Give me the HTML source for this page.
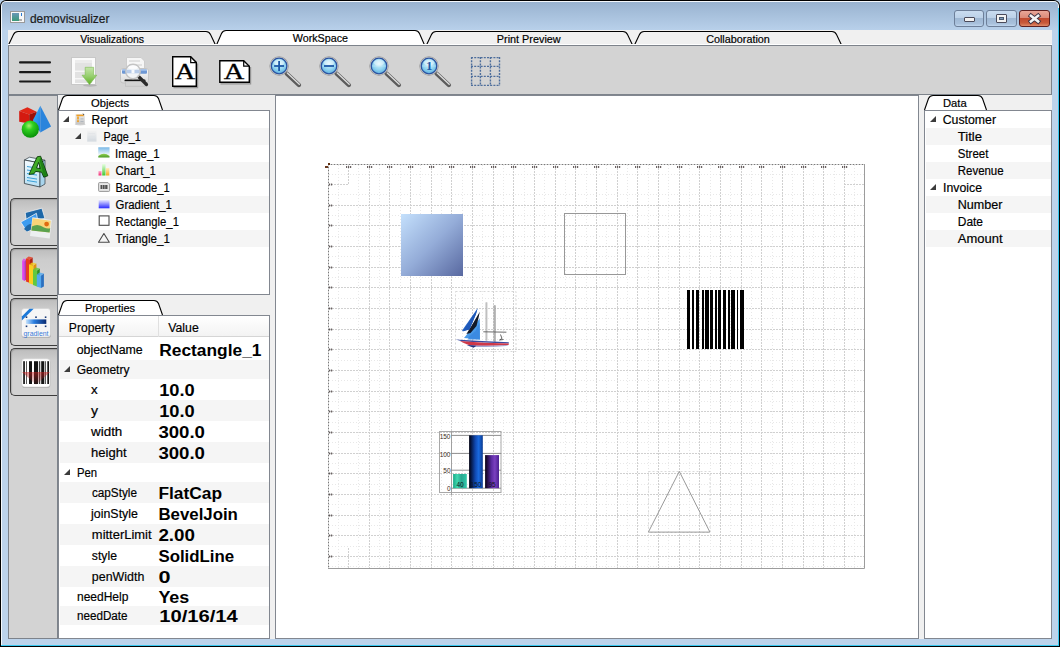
<!DOCTYPE html><html><head><meta charset="utf-8"><style>

*{box-sizing:border-box}
html,body{margin:0;padding:0}
body{width:1060px;height:647px;position:relative;overflow:hidden;background:#b9d1ea;font-family:"Liberation Sans",sans-serif;color:#000}
.ab{position:absolute}
.t{position:absolute;white-space:nowrap;font-size:12px;line-height:14px}
.row{position:absolute;left:60px;width:209px}

</style></head><body>
<div class="ab" style="left:0;top:0;width:1060px;height:647px;background:#000;border-radius:6px 6px 0 0"></div>
<div class="ab" style="left:1px;top:1px;width:1058px;height:645px;background:#f4f8fc;border-radius:5px 5px 0 0"></div>
<div class="ab" style="left:1058px;top:8px;width:1px;height:638px;background:#38c8f0"></div>
<div class="ab" style="left:1px;top:645px;width:1058px;height:1px;background:#38c8f0"></div>
<div class="ab" style="left:2px;top:2px;width:1056px;height:643px;background:#bcd3eb;border-radius:4px 4px 0 0"></div>
<div class="ab" style="left:2px;top:2px;width:1056px;height:28px;background:linear-gradient(#99b3d0,#b8d0ea);border-radius:4px 4px 0 0"></div>
<div class="ab" style="left:10px;top:11px;width:15px;height:12px;background:#f8f8f8;border:1px solid #9a9a9a;box-shadow:0 0 0 0 #000"></div>
<div class="ab" style="left:12px;top:13px;width:7px;height:8px;background:linear-gradient(#6a98b8,#3a9a78)"></div>
<div class="ab" style="left:21px;top:13px;width:1px;height:3px;background:#2a7ad0"></div>
<div class="ab" style="left:19px;top:19px;width:3px;height:2px;background:#b0b0b0"></div>
<div class="ab" style="left:954px;top:10px;width:30px;height:17px;border:1px solid #6d7f99;border-radius:3px;background:linear-gradient(#c9dcf0 0%,#bcd1e8 45%,#9fb8d4 50%,#a9c1dc 85%,#c0d6ee 100%)"></div>
<div class="ab" style="left:964px;top:13px;width:0;height:0"></div>
<div class="ab" style="left:964px;top:17px;width:11px;height:5px;background:#f2f2f2;border:1px solid #4a4a5a;border-radius:1px"></div>
<div class="ab" style="left:986px;top:10px;width:31px;height:17px;border:1px solid #6d7f99;border-radius:3px;background:linear-gradient(#c9dcf0 0%,#bcd1e8 45%,#9fb8d4 50%,#a9c1dc 85%,#c0d6ee 100%)"></div>
<div class="ab" style="left:996px;top:14px;width:11px;height:9px;background:#f2f2f2;border:1px solid #4a4a5a;border-radius:1px"></div>
<div class="ab" style="left:999px;top:17px;width:5px;height:3px;background:#7f9ab8;border:1px solid #4a5a70"></div>
<div class="ab" style="left:1019px;top:10px;width:31px;height:17px;border:1px solid #5e1f1f;border-radius:3px;background:linear-gradient(#e9a698 0%,#db8a78 45%,#c14a30 50%,#c85a3a 80%,#e08a68 100%)"></div>
<svg class="ab" style="left:1019px;top:10px" width="31" height="17"><path d="M11.9 5.8 L19.1 11.4 M19.1 5.8 L11.9 11.4" stroke="#3a3040" stroke-width="4.4" stroke-linecap="square"/><path d="M11.9 5.8 L19.1 11.4 M19.1 5.8 L11.9 11.4" stroke="#f4f4f4" stroke-width="2.6" stroke-linecap="square"/></svg>
<div class="ab" style="left:8px;top:30px;width:1044px;height:609px;background:#f0f0f0"></div>
<svg class="ab" style="left:0;top:0" width="1060" height="50"><path d="M8.5 45 L13.5 34.5 Q15 31.5 18 31.5 L206 31.5 Q209 31.5 210.5 34.5 L215.5 45 Z" fill="#f0f0f0"/><path d="M8.5 45 L13.5 34.5 Q15 31.5 18 31.5 L206 31.5 Q209 31.5 210.5 34.5 L215.5 45" fill="none" stroke="#000" stroke-width="1.1"/><path d="M216.5 45 L221.5 33.5 Q223 30.5 226 30.5 L415 30.5 Q418 30.5 419.5 33.5 L424.5 45 Z" fill="#ffffff"/><path d="M216.5 45 L221.5 33.5 Q223 30.5 226 30.5 L415 30.5 Q418 30.5 419.5 33.5 L424.5 45" fill="none" stroke="#000" stroke-width="1.1"/><path d="M426.5 45 L431.5 34.5 Q433 31.5 436 31.5 L623 31.5 Q626 31.5 627.5 34.5 L632.5 45 Z" fill="#f0f0f0"/><path d="M426.5 45 L431.5 34.5 Q433 31.5 436 31.5 L623 31.5 Q626 31.5 627.5 34.5 L632.5 45" fill="none" stroke="#000" stroke-width="1.1"/><path d="M634.5 45 L639.5 34.5 Q641 31.5 644 31.5 L832 31.5 Q835 31.5 836.5 34.5 L841.5 45 Z" fill="#f0f0f0"/><path d="M634.5 45 L639.5 34.5 Q641 31.5 644 31.5 L832 31.5 Q835 31.5 836.5 34.5 L841.5 45" fill="none" stroke="#000" stroke-width="1.1"/></svg>
<div class="ab" style="left:8px;top:44px;width:1044px;height:1px;background:#fff"></div>
<div class="ab" style="left:8px;top:45px;width:1044px;height:50px;background:#d3d3d3;border:1px solid #7d838b;border-bottom-width:1px"></div>
<div class="ab" style="left:8px;top:95px;width:50px;height:544px;background:#d3d3d3;border:1px solid #7d838b"></div>
<div class="ab" style="left:10px;top:198px;width:47px;height:48px;border:1px solid #3c3c3c;border-right:none;border-radius:5px 0 0 5px;background:linear-gradient(#bdbdbd,#cdcdcd 25%,#d2d2d2 60%,#d2d2d2);box-shadow:inset 1px 1px 1px rgba(0,0,0,0.15)"></div>
<div class="ab" style="left:10px;top:248px;width:47px;height:48px;border:1px solid #3c3c3c;border-right:none;border-radius:5px 0 0 5px;background:linear-gradient(#bdbdbd,#cdcdcd 25%,#d2d2d2 60%,#d2d2d2);box-shadow:inset 1px 1px 1px rgba(0,0,0,0.15)"></div>
<div class="ab" style="left:10px;top:298px;width:47px;height:48px;border:1px solid #3c3c3c;border-right:none;border-radius:5px 0 0 5px;background:linear-gradient(#bdbdbd,#cdcdcd 25%,#d2d2d2 60%,#d2d2d2);box-shadow:inset 1px 1px 1px rgba(0,0,0,0.15)"></div>
<div class="ab" style="left:10px;top:348px;width:47px;height:48px;border:1px solid #3c3c3c;border-right:none;border-radius:5px 0 0 5px;background:linear-gradient(#bdbdbd,#cdcdcd 25%,#d2d2d2 60%,#d2d2d2);box-shadow:inset 1px 1px 1px rgba(0,0,0,0.15)"></div>
<div class="ab" style="left:58px;top:110px;width:212px;height:185px;background:#fff;border:1px solid #828790"></div>
<div class="ab" style="left:58px;top:315px;width:212px;height:324px;background:#fff;border:1px solid #828790"></div>
<div class="ab" style="left:275px;top:95px;width:644px;height:544px;background:#fff;border:1px solid #828790"></div>
<div class="ab" style="left:924px;top:110px;width:128px;height:529px;background:#fff;border:1px solid #828790"></div>
<svg class="ab" style="left:0;top:0" width="1060" height="647"><path d="M58.5 110 L62.5 98.5 Q64 95.5 67 95.5 L154 95.5 Q157 95.5 158.5 98.5 L162.5 110 Z" fill="#fff"/><path d="M58.5 110 L62.5 98.5 Q64 95.5 67 95.5 L154 95.5 Q157 95.5 158.5 98.5 L162.5 110" fill="none" stroke="#000" stroke-width="1.1"/></svg>
<svg class="ab" style="left:0;top:0" width="1060" height="647"><path d="M58.5 315 L62.5 303.5 Q64 300.5 67 300.5 L154 300.5 Q157 300.5 158.5 303.5 L162.5 315 Z" fill="#fff"/><path d="M58.5 315 L62.5 303.5 Q64 300.5 67 300.5 L154 300.5 Q157 300.5 158.5 303.5 L162.5 315" fill="none" stroke="#000" stroke-width="1.1"/></svg>
<svg class="ab" style="left:0;top:0" width="1060" height="647"><path d="M924.5 110 L928.5 98.5 Q930 95.5 933 95.5 L978 95.5 Q981 95.5 982.5 98.5 L986.5 110 Z" fill="#fff"/><path d="M924.5 110 L928.5 98.5 Q930 95.5 933 95.5 L978 95.5 Q981 95.5 982.5 98.5 L986.5 110" fill="none" stroke="#000" stroke-width="1.1"/></svg>
<svg class="ab" style="left:63px;top:116px" width="7" height="7"><path d="M6 0 L6 6 L0 6 Z" fill="#3c3c3c"/></svg>
<div class="ab" style="left:60px;top:128px;width:209px;height:17px;background:#f5f5f5"></div>
<svg class="ab" style="left:75px;top:133px" width="7" height="7"><path d="M6 0 L6 6 L0 6 Z" fill="#3c3c3c"/></svg>
<div class="ab" style="left:60px;top:162px;width:209px;height:17px;background:#f5f5f5"></div>
<div class="ab" style="left:60px;top:196px;width:209px;height:17px;background:#f5f5f5"></div>
<div class="ab" style="left:60px;top:230px;width:209px;height:17px;background:#f5f5f5"></div>
<svg class="ab" style="left:930px;top:116px" width="7" height="7"><path d="M6 0 L6 6 L0 6 Z" fill="#3c3c3c"/></svg>
<div class="ab" style="left:926px;top:128px;width:125px;height:17px;background:#f5f5f5"></div>
<div class="ab" style="left:926px;top:162px;width:125px;height:17px;background:#f5f5f5"></div>
<svg class="ab" style="left:930px;top:184px" width="7" height="7"><path d="M6 0 L6 6 L0 6 Z" fill="#3c3c3c"/></svg>
<div class="ab" style="left:926px;top:196px;width:125px;height:17px;background:#f5f5f5"></div>
<div class="ab" style="left:926px;top:230px;width:125px;height:17px;background:#f5f5f5"></div>
<div class="ab" style="left:59px;top:316px;width:210px;height:21px;background:linear-gradient(#ffffff,#f3f3f3);border-bottom:1px solid #d5d5d5"></div>
<div class="ab" style="left:158px;top:316px;width:1px;height:21px;background:#e0e0e0"></div>
<div class="ab" style="left:60px;top:360px;width:209px;height:19px;background:#f5f5f5"></div>
<svg class="ab" style="left:64px;top:366px" width="7" height="7"><path d="M6 0 L6 6 L0 6 Z" fill="#3c3c3c"/></svg>
<div class="ab" style="left:60px;top:400px;width:209px;height:21px;background:#f5f5f5"></div>
<div class="ab" style="left:60px;top:442px;width:209px;height:21px;background:#f5f5f5"></div>
<svg class="ab" style="left:64px;top:469px" width="7" height="7"><path d="M6 0 L6 6 L0 6 Z" fill="#3c3c3c"/></svg>
<div class="ab" style="left:60px;top:482px;width:209px;height:21px;background:#f5f5f5"></div>
<div class="ab" style="left:60px;top:524px;width:209px;height:21px;background:#f5f5f5"></div>
<div class="ab" style="left:60px;top:566px;width:209px;height:21px;background:#f5f5f5"></div>
<div class="ab" style="left:60px;top:606px;width:209px;height:19px;background:#f5f5f5"></div>
<svg class="ab" style="left:0;top:45px" width="520" height="50" viewBox="0 45 520 50"><defs><linearGradient id="garr" x1="0" y1="0" x2="0" y2="1"><stop offset="0" stop-color="#c4e6a8"/><stop offset="0.5" stop-color="#98d070"/><stop offset="1" stop-color="#5fb024"/></linearGradient><radialGradient id="glens" cx="0.5" cy="0.35" r="0.65"><stop offset="0" stop-color="#d8f4fc"/><stop offset="0.6" stop-color="#90d4f0"/><stop offset="1" stop-color="#5aaee0"/></radialGradient><linearGradient id="ghand" x1="0" y1="0" x2="1" y2="0"><stop offset="0" stop-color="#707070"/><stop offset="0.5" stop-color="#e8e8e8"/><stop offset="1" stop-color="#909090"/></linearGradient><linearGradient id="gpr" x1="0" y1="0" x2="0" y2="1"><stop offset="0" stop-color="#fafafa"/><stop offset="1" stop-color="#d8d8d8"/></linearGradient><filter id="sh" x="-20%" y="-20%" width="140%" height="140%"><feGaussianBlur stdDeviation="0.6"/></filter></defs><rect x="19" y="61.3" width="32" height="2.2" rx="1" fill="#1a1a1a"/><rect x="19" y="71" width="32" height="2.2" rx="1" fill="#1a1a1a"/><rect x="19" y="80.4" width="32" height="2.2" rx="1" fill="#1a1a1a"/><rect x="71.5" y="57.5" width="24" height="27" fill="#fbfbfb" stroke="#c8c8c8" stroke-width="1"/><rect x="75" y="60" width="17" height="23" fill="#e2e2e2"/><rect x="75" y="60" width="17" height="3" fill="#ececec"/><rect x="75" y="70.6" width="17" height="1.2" fill="#fafafa"/><rect x="75" y="78.2" width="17" height="1.2" fill="#fafafa"/><ellipse cx="90" cy="85.5" rx="7" ry="1.2" fill="#9a9a9a" opacity="0.5" filter="url(#sh)"/><path d="M85.2 67.3 L93.6 67.3 L93.6 75.2 L96.8 75.2 L89.5 84.6 L82 75.2 L85.2 75.2 Z" fill="url(#garr)" stroke="#7ab850" stroke-width="0.6"/><path d="M126.5 57.5 L141 57.5 L144.5 61 L144.5 71 L126.5 71 Z" fill="#f6f6f6" stroke="#cccccc" stroke-width="1"/><rect x="129" y="60" width="11" height="2" fill="#e2e2e2"/><rect x="129" y="64" width="13" height="2" fill="#e2e2e2"/><rect x="120.5" y="68.5" width="28" height="14.5" rx="2.5" fill="url(#gpr)" stroke="#c4c4c4" stroke-width="1"/><rect x="122" y="69.5" width="25" height="4.2" rx="1" fill="#6e98d4"/><rect x="122" y="69.5" width="25" height="1.4" fill="#9cbce8"/><rect x="124.5" y="79.6" width="21" height="1.8" rx="0.9" fill="#141414"/><rect x="125.5" y="81.4" width="19.5" height="4.8" fill="#d2d2d2" stroke="#bababa" stroke-width="0.6"/><line x1="138.5" y1="76.5" x2="146.5" y2="84.5" stroke="#2a2a2a" stroke-width="3.2" stroke-linecap="round"/><circle cx="133" cy="71.4" r="7.2" fill="#f4f6f8" fill-opacity="0.9" stroke="#c4c4c4" stroke-width="1.4"/><rect x="126.5" y="69.8" width="13" height="3.4" fill="#a8c0e4" opacity="0.75"/><rect x="131.5" y="69.8" width="3" height="3.4" fill="#ffffff" opacity="0.9"/><ellipse cx="133" cy="67.5" rx="4.5" ry="2" fill="#ffffff" opacity="0.7"/><path d="M173.5 87.6 L197.6 87.6 L197.6 63.6" fill="none" stroke="#6a6a6a" stroke-width="1.2" opacity="0.6"/><path d="M172.7 56.7 L190.7 56.7 L196.3 62.4 L196.3 86.3 L172.7 86.3 Z" fill="#fff" stroke="#000" stroke-width="1.4"/><path d="M190.7 56.7 L190.7 62.6 L196.3 62.6" fill="none" stroke="#000" stroke-width="1.2"/><text x="185" y="78.9" font-family="Liberation Serif" font-size="23.5" text-anchor="middle" textLength="20.5" lengthAdjust="spacingAndGlyphs" stroke="#000" stroke-width="0.35">A</text><path d="M220.5 83.8 L250.6 83.8 L250.6 67" fill="none" stroke="#6a6a6a" stroke-width="1.2" opacity="0.6"/><path d="M219.8 60.8 L243.7 60.8 L249.3 66.2 L249.3 82.3 L219.8 82.3 Z" fill="#fff" stroke="#000" stroke-width="1.4"/><path d="M243.7 60.8 L243.7 66.1 L249.3 66.1" fill="none" stroke="#000" stroke-width="1.2"/><text x="234" y="78.6" font-family="Liberation Serif" font-size="23.5" text-anchor="middle" textLength="20.5" lengthAdjust="spacingAndGlyphs" stroke="#000" stroke-width="0.35">A</text><line x1="286.6" y1="73.5" x2="298.90000000000003" y2="85" stroke="#5c5c5c" stroke-width="4.4" stroke-linecap="round"/><line x1="287.3" y1="73" x2="299.3" y2="84.3" stroke="#dcdcdc" stroke-width="1.4" stroke-linecap="round"/><circle cx="279.1" cy="66" r="8.9" fill="none" stroke="#9a9a9a" stroke-width="1.6"/><circle cx="279.1" cy="66" r="8.5" fill="none" stroke="#e6e6e6" stroke-width="0.8"/><circle cx="279.1" cy="66" r="7.8" fill="url(#glens)" stroke="#2a52a0" stroke-width="1.3"/><ellipse cx="279.1" cy="62.8" rx="5" ry="2.8" fill="#ffffff" opacity="0.4"/><rect x="272.6" y="65.6" width="13" height="0.8" fill="#ffffff" opacity="0.35"/><rect x="274.1" y="65.1" width="10" height="1.8" fill="#1c58a8"/><rect x="278.20000000000005" y="61" width="1.8" height="10" fill="#1c58a8"/><line x1="336.5" y1="73.5" x2="348.8" y2="85" stroke="#5c5c5c" stroke-width="4.4" stroke-linecap="round"/><line x1="337.2" y1="73" x2="349.2" y2="84.3" stroke="#dcdcdc" stroke-width="1.4" stroke-linecap="round"/><circle cx="329" cy="66" r="8.9" fill="none" stroke="#9a9a9a" stroke-width="1.6"/><circle cx="329" cy="66" r="8.5" fill="none" stroke="#e6e6e6" stroke-width="0.8"/><circle cx="329" cy="66" r="7.8" fill="url(#glens)" stroke="#2a52a0" stroke-width="1.3"/><ellipse cx="329" cy="62.8" rx="5" ry="2.8" fill="#ffffff" opacity="0.4"/><rect x="322.5" y="65.6" width="13" height="0.8" fill="#ffffff" opacity="0.35"/><rect x="324" y="65.1" width="10" height="1.8" fill="#1c58a8"/><line x1="386.5" y1="73.5" x2="398.8" y2="85" stroke="#5c5c5c" stroke-width="4.4" stroke-linecap="round"/><line x1="387.2" y1="73" x2="399.2" y2="84.3" stroke="#dcdcdc" stroke-width="1.4" stroke-linecap="round"/><circle cx="379" cy="66" r="8.9" fill="none" stroke="#9a9a9a" stroke-width="1.6"/><circle cx="379" cy="66" r="8.5" fill="none" stroke="#e6e6e6" stroke-width="0.8"/><circle cx="379" cy="66" r="7.8" fill="url(#glens)" stroke="#2a52a0" stroke-width="1.3"/><ellipse cx="379" cy="62.8" rx="5" ry="2.8" fill="#ffffff" opacity="0.4"/><rect x="372.5" y="65.6" width="13" height="0.8" fill="#ffffff" opacity="0.35"/><line x1="436.5" y1="73.5" x2="448.8" y2="85" stroke="#5c5c5c" stroke-width="4.4" stroke-linecap="round"/><line x1="437.2" y1="73" x2="449.2" y2="84.3" stroke="#dcdcdc" stroke-width="1.4" stroke-linecap="round"/><circle cx="429" cy="66" r="8.9" fill="none" stroke="#9a9a9a" stroke-width="1.6"/><circle cx="429" cy="66" r="8.5" fill="none" stroke="#e6e6e6" stroke-width="0.8"/><circle cx="429" cy="66" r="7.8" fill="url(#glens)" stroke="#2a52a0" stroke-width="1.3"/><ellipse cx="429" cy="62.8" rx="5" ry="2.8" fill="#ffffff" opacity="0.4"/><rect x="422.5" y="65.6" width="13" height="0.8" fill="#ffffff" opacity="0.35"/><text x="429.3" y="70.3" font-family="Liberation Serif" font-size="13" font-weight="bold" fill="#1c58a8" text-anchor="middle">1</text><line x1="471.6" y1="57" x2="471.6" y2="86" stroke="#4e6e9c" stroke-width="1.4" stroke-dasharray="2 1.2"/><line x1="480.4" y1="57" x2="480.4" y2="86" stroke="#4e6e9c" stroke-width="1.4" stroke-dasharray="2 1.2"/><line x1="490.4" y1="57" x2="490.4" y2="86" stroke="#4e6e9c" stroke-width="1.4" stroke-dasharray="2 1.2"/><line x1="499.5" y1="57" x2="499.5" y2="86" stroke="#4e6e9c" stroke-width="1.4" stroke-dasharray="2 1.2"/><line x1="471" y1="57.6" x2="500" y2="57.6" stroke="#4e6e9c" stroke-width="1.4" stroke-dasharray="2 1.2"/><line x1="471" y1="66.4" x2="500" y2="66.4" stroke="#4e6e9c" stroke-width="1.4" stroke-dasharray="2 1.2"/><line x1="471" y1="76.4" x2="500" y2="76.4" stroke="#4e6e9c" stroke-width="1.4" stroke-dasharray="2 1.2"/><line x1="471" y1="85.4" x2="500" y2="85.4" stroke="#4e6e9c" stroke-width="1.4" stroke-dasharray="2 1.2"/></svg>
<svg class="ab" style="left:8px;top:95px" width="50" height="300" viewBox="8 95 50 300"><defs><radialGradient id="gsph" cx="0.42" cy="0.3" r="0.7"><stop offset="0" stop-color="#a8f070"/><stop offset="0.35" stop-color="#30d020"/><stop offset="1" stop-color="#089008"/></radialGradient><linearGradient id="gpyrL" x1="0" y1="0" x2="1" y2="1"><stop offset="0" stop-color="#40b8ff"/><stop offset="1" stop-color="#1878e0"/></linearGradient><linearGradient id="gpyrR" x1="0" y1="0" x2="1" y2="1"><stop offset="0" stop-color="#2a8ee8"/><stop offset="1" stop-color="#3c88d8"/></linearGradient><linearGradient id="ggrad" x1="0" y1="0" x2="1" y2="0"><stop offset="0" stop-color="#c8e4fc"/><stop offset="0.4" stop-color="#2a7ee0"/><stop offset="1" stop-color="#0a2a70"/></linearGradient><linearGradient id="gdoc" x1="0" y1="0" x2="0" y2="1"><stop offset="0" stop-color="#f4fbff"/><stop offset="1" stop-color="#b8e0f4"/></linearGradient><linearGradient id="gA" x1="0" y1="0" x2="1" y2="1"><stop offset="0" stop-color="#58c030"/><stop offset="1" stop-color="#1a8a18"/></linearGradient><linearGradient id="gred" x1="0" y1="0" x2="0" y2="1"><stop offset="0" stop-color="#d02020" stop-opacity="0.55"/><stop offset="1" stop-color="#802020" stop-opacity="0.1"/></linearGradient></defs><path d="M19.2 111 L27.4 107.3 L36.6 111.7 L29.2 114.5 Z" fill="#e02818"/><path d="M19.2 111 L29.2 114.5 L29.2 123.5 L19.2 121.7 Z" fill="#d41a10"/><path d="M29.2 114.5 L36.6 111.7 L36.6 119.5 L29.2 123.5 Z" fill="#9c1008"/><path d="M40.3 105.8 L32.9 120.3 L40.3 132.5 Z" fill="url(#gpyrL)"/><path d="M40.3 105.8 L51.1 126.6 L40.3 132.5 Z" fill="#2a84dc"/><circle cx="30.3" cy="129.2" r="8.6" fill="url(#gsph)"/><path d="M24.4 160 L29.5 157.2 L45 160.2 L40 163 Z" fill="#e8f6fc" stroke="#303a40" stroke-width="0.7"/><path d="M24.4 160 L40 163 L40 187 L24.4 183.5 Z" fill="url(#gdoc)" stroke="#303a40" stroke-width="0.8"/><path d="M40 163 L45 160.2 L45 184 L40 187 Z" fill="#a8d4ec" stroke="#303a40" stroke-width="0.7"/><line x1="27" y1="166.5" x2="37" y2="168.1" stroke="#3aa0d8" stroke-width="1"/><line x1="27" y1="170" x2="37" y2="171.6" stroke="#3aa0d8" stroke-width="1"/><line x1="27" y1="173.5" x2="37" y2="175.1" stroke="#3aa0d8" stroke-width="1"/><line x1="27" y1="177.5" x2="37" y2="179.1" stroke="#3aa0d8" stroke-width="1"/><line x1="27" y1="180.5" x2="37" y2="182.1" stroke="#3aa0d8" stroke-width="1"/><path d="M37.2 156.8 L40.6 156.2 L47.8 175.8 L43.8 177.2 L41.6 172.2 L35.6 171.4 L34 173.8 L29 174.4 Z M36.6 168 L38.6 162.4 L40.3 168.6 Z" fill="url(#gA)" stroke="#0a3a0a" stroke-width="0.9" fill-rule="evenodd" stroke-linejoin="round"/><path d="M40.6 157.5 L46.5 175 L44.2 176 L39.4 160 Z" fill="#1a7a14" opacity="0.8"/><path d="M25.2 212.6 L41.9 208.2 L44.9 218.4 L26.5 222 Z" fill="#1e68a8" stroke="#f0f0f0" stroke-width="0.8"/><path d="M20.8 222.1 L36.4 213.3 L39 227 L26.9 231.6 Z" fill="#3c9cf0" stroke="#f0f0f0" stroke-width="0.8"/><path d="M24 229 Q28 223 34 224 L37 227 L27 231.5 Z" fill="#1e68a8"/><path d="M32.4 217.3 L51.7 220 L49.7 238.4 L30 236 Z" fill="#eceff0"/><path d="M32.6 218.3 L50.8 220.8 L49.6 232.5 L31.4 230.5 Z" fill="#f8d478"/><path d="M31.8 226.5 Q38 223 44 227.5 Q47 229 50.2 228.3 L49.6 232.5 L31.4 230.5 Z" fill="#5aa24e"/><circle cx="46.6" cy="224.1" r="2.4" fill="#e06a10"/><path d="M22.2 260.5 L24.419999999999998 261.5 L24.419999999999998 281 L22.2 279.5 Z" fill="#e040f0"/><path d="M24.419999999999998 261.5 L25.9 259.5 L25.9 279.5 L24.419999999999998 281 Z" fill="#b020c0"/><path d="M22.2 260.5 L23.68 258.5 L25.9 259.5 L24.419999999999998 261.5 Z" fill="#e040f0" opacity="0.8"/><path d="M25.9 258.5 L29.98 259.5 L29.98 283 L25.9 281.5 Z" fill="#e83a20"/><path d="M29.98 259.5 L32.7 257.5 L32.7 281.5 L29.98 283 Z" fill="#b02010"/><path d="M25.9 258.5 L28.62 256.5 L32.7 257.5 L29.98 259.5 Z" fill="#e83a20" opacity="0.8"/><path d="M29 264.6 L33.44 265.6 L33.44 284.7 L29 283.2 Z" fill="#f8d020"/><path d="M33.44 265.6 L36.4 263.6 L36.4 283.2 L33.44 284.7 Z" fill="#e09010"/><path d="M29 264.6 L31.96 262.6 L36.4 263.6 L33.44 265.6 Z" fill="#f8d020" opacity="0.8"/><path d="M33 269.4 L37.08 270.4 L37.08 286.4 L33 284.9 Z" fill="#60c840"/><path d="M37.08 270.4 L39.8 268.4 L39.8 284.9 L37.08 286.4 Z" fill="#309020"/><path d="M33 269.4 L35.72 267.4 L39.8 268.4 L37.08 270.4 Z" fill="#60c840" opacity="0.8"/><path d="M36.8 274.5 L41.059999999999995 275.5 L41.059999999999995 288 L36.8 286.5 Z" fill="#50a8f0"/><path d="M41.059999999999995 275.5 L43.9 273.5 L43.9 286.5 L41.059999999999995 288 Z" fill="#2a70c0"/><path d="M36.8 274.5 L39.64 272.5 L43.9 273.5 L41.059999999999995 275.5 Z" fill="#50a8f0" opacity="0.8"/><rect x="21.5" y="309.5" width="29.5" height="28.5" rx="3" fill="#808080" opacity="0.45" filter="url(#sh)"/><rect x="21.5" y="308.5" width="29" height="28.5" rx="3" fill="#f6f6f6" stroke="#d0d0d0" stroke-width="0.6"/><path d="M21.8 316.5 L29.5 308.8 L33.7 308.8 L21.8 320.6 Z" fill="#1a78d8"/><rect x="25.9" y="319.4" width="20.4" height="4.5" fill="url(#ggrad)"/><rect x="25.7" y="316.4" width="1.6" height="1.6" fill="#1a3a78"/><rect x="25.7" y="325.5" width="1.6" height="1.6" fill="#1a3a78"/><rect x="35.2" y="316.4" width="1.6" height="1.6" fill="#1a3a78"/><rect x="35.2" y="325.5" width="1.6" height="1.6" fill="#1a3a78"/><rect x="44.800000000000004" y="316.4" width="1.6" height="1.6" fill="#1a3a78"/><rect x="44.800000000000004" y="325.5" width="1.6" height="1.6" fill="#1a3a78"/><text x="36" y="335.6" font-family="Liberation Sans" font-size="7.2" fill="#3a7ad8" text-anchor="middle" textLength="25" lengthAdjust="spacingAndGlyphs">gradient</text><rect x="21.8" y="359.5" width="28.5" height="28.5" rx="3" fill="#808080" opacity="0.45" filter="url(#sh)"/><rect x="21.8" y="358.8" width="28.2" height="28.2" rx="3" fill="#fff" stroke="#d0d0d0" stroke-width="0.6"/><rect x="23.2" y="361.2" width="1.6999999999999993" height="22.8" fill="#141414"/><rect x="26.1" y="361.2" width="0.6999999999999993" height="22.8" fill="#141414"/><rect x="29" y="361.2" width="3" height="22.8" fill="#141414"/><rect x="34" y="361.2" width="4.100000000000001" height="22.8" fill="#141414"/><rect x="39.2" y="361.2" width="1.0" height="22.8" fill="#141414"/><rect x="41.2" y="361.2" width="3.0999999999999943" height="22.8" fill="#141414"/><rect x="45.3" y="361.2" width="0.7000000000000028" height="22.8" fill="#141414"/><rect x="47.3" y="361.2" width="1.7000000000000028" height="22.8" fill="#141414"/><path d="M22 372 L50 372 L36 385 Z" fill="url(#gred)"/></svg>
<svg class="ab" style="left:70px;top:110px" width="45" height="140" viewBox="70 110 45 140"><defs><linearGradient id="gimg" x1="0" y1="0" x2="0" y2="1"><stop offset="0" stop-color="#8cc8f0"/><stop offset="0.5" stop-color="#e4f2fa"/><stop offset="0.58" stop-color="#88cc50"/><stop offset="0.85" stop-color="#58a830"/><stop offset="1" stop-color="#e8f0e0"/></linearGradient><linearGradient id="ggr2" x1="0" y1="0" x2="0" y2="1"><stop offset="0" stop-color="#ffffff"/><stop offset="1" stop-color="#2020ff"/></linearGradient></defs><defs><linearGradient id="grep" x1="0" y1="0" x2="0" y2="1"><stop offset="0" stop-color="#ececec"/><stop offset="1" stop-color="#c4c4c4"/></linearGradient><linearGradient id="gpg" x1="0" y1="0" x2="0" y2="1"><stop offset="0" stop-color="#f2f2f2"/><stop offset="1" stop-color="#d4dae0"/></linearGradient></defs><ellipse cx="80.2" cy="124.6" rx="5.5" ry="0.8" fill="#b0b0b0" opacity="0.5"/><rect x="75.4" y="114" width="9.4" height="10.4" fill="url(#grep)"/><rect x="76.4" y="114.6" width="7.4" height="1.6" fill="#f0a028"/><rect x="77.5" y="116" width="1" height="5" fill="#f4b040"/><circle cx="78" cy="118" r="1" fill="#f0a028"/><circle cx="78" cy="121.2" r="1" fill="#f0a028"/><rect x="80.5" y="118.5" width="3" height="0.8" fill="#a8b0b8"/><rect x="80.5" y="121" width="3" height="0.8" fill="#a8b0b8"/><path d="M82.6 113 L84.4 114.8 L83.2 115.2 Z" fill="#505050"/><rect x="87.2" y="130.6" width="9.3" height="11" fill="url(#gpg)"/><rect x="88.5" y="133" width="6.5" height="0.6" fill="#dfe3e6"/><rect x="88.5" y="136" width="6.5" height="0.6" fill="#dfe3e6"/><rect x="88.5" y="139" width="6.5" height="0.6" fill="#d8dde2"/><defs><linearGradient id="gsky" x1="0" y1="0" x2="0" y2="1"><stop offset="0" stop-color="#78b8e8"/><stop offset="1" stop-color="#e8f4fa"/></linearGradient><linearGradient id="ghill" x1="0" y1="0" x2="0" y2="1"><stop offset="0" stop-color="#90d050"/><stop offset="1" stop-color="#4a9a28"/></linearGradient></defs><rect x="98.3" y="147.3" width="11.2" height="10.3" fill="#eef4f0"/><rect x="98.3" y="147.3" width="11.2" height="7" fill="url(#gsky)"/><path d="M98.3 156 Q103.9 151.5 109.5 156 L109.5 157.6 L98.3 157.6 Z" fill="url(#ghill)"/><defs><linearGradient id="gc1" x1="0" y1="0" x2="0" y2="1"><stop offset="0" stop-color="#ffb0d0"/><stop offset="1" stop-color="#f02870"/></linearGradient><linearGradient id="gc2" x1="0" y1="0" x2="0" y2="1"><stop offset="0" stop-color="#e8ffe0"/><stop offset="1" stop-color="#40c830"/></linearGradient><linearGradient id="gc3" x1="0" y1="0" x2="0" y2="1"><stop offset="0" stop-color="#fff0c0"/><stop offset="1" stop-color="#f8a820"/></linearGradient></defs><rect x="98.5" y="171" width="3" height="4.5" fill="url(#gc1)"/><rect x="102.2" y="164" width="3.3" height="11.5" fill="url(#gc2)"/><rect x="106" y="168" width="3.3" height="7.5" fill="url(#gc3)"/></svg>
<svg class="ab" style="left:95px;top:180px" width="20" height="66" viewBox="95 180 20 66"><defs><linearGradient id="ggr3" x1="0" y1="0" x2="0" y2="1"><stop offset="0" stop-color="#ffffff"/><stop offset="1" stop-color="#2a2aff"/></linearGradient></defs><path d="M98.6 183.5 Q98.6 182.6 99.5 182.6 L108 182.6 L109.6 184.2 L109.6 190.6 Q109.6 191.4 108.8 191.4 L99.5 191.4 Q98.6 191.4 98.6 190.5 Z" fill="#e8e8e8" stroke="#8c8c8c" stroke-width="0.9"/><rect x="100.5" y="185" width="7" height="4" fill="#505050"/><rect x="102.4" y="185" width="0.6" height="4" fill="#d0d0d0"/><rect x="104.6" y="185" width="0.6" height="4" fill="#d0d0d0"/><rect x="98.7" y="199.1" width="10.8" height="9.2" fill="url(#ggr3)"/><rect x="99.2" y="215.9" width="9.8" height="9.4" fill="none" stroke="#4a4a4a" stroke-width="1.1"/><path d="M103.9 233.5 L109.3 242.3 L98.5 242.3 Z" fill="none" stroke="#4a4a4a" stroke-width="1.1" stroke-linejoin="round"/></svg>
<svg class="ab" style="left:276px;top:96px" width="642" height="542" viewBox="276 96 642 542"><defs><linearGradient id="gsq" x1="0" y1="0" x2="1" y2="1"><stop offset="0" stop-color="#c4e0fc"/><stop offset="0.5" stop-color="#94acd8"/><stop offset="1" stop-color="#5868a0"/></linearGradient><linearGradient id="gb1" x1="0" y1="0" x2="1" y2="0"><stop offset="0" stop-color="#1aa888"/><stop offset="0.3" stop-color="#40d8b0"/><stop offset="0.6" stop-color="#28a890"/><stop offset="1" stop-color="#30c8a8"/></linearGradient><linearGradient id="gb2" x1="0" y1="0" x2="1" y2="0"><stop offset="0" stop-color="#000010"/><stop offset="0.45" stop-color="#1048b0"/><stop offset="0.7" stop-color="#1a6ae0"/><stop offset="1" stop-color="#0a3a90"/></linearGradient><linearGradient id="gb3" x1="0" y1="0" x2="1" y2="0"><stop offset="0" stop-color="#080010"/><stop offset="0.45" stop-color="#5a2aa0"/><stop offset="0.7" stop-color="#7a40c0"/><stop offset="1" stop-color="#4a2090"/></linearGradient><linearGradient id="ghull" x1="0" y1="0" x2="0" y2="1"><stop offset="0" stop-color="#3a4a9a"/><stop offset="0.4" stop-color="#e8e8f0"/><stop offset="0.6" stop-color="#d03040"/><stop offset="1" stop-color="#8890c0"/></linearGradient></defs><line x1="338.5" y1="165" x2="338.5" y2="568" stroke="#e8e8e8" stroke-width="1" stroke-dasharray="1 2"/><line x1="358.5" y1="165" x2="358.5" y2="568" stroke="#e8e8e8" stroke-width="1" stroke-dasharray="1 2"/><line x1="379.5" y1="165" x2="379.5" y2="568" stroke="#e8e8e8" stroke-width="1" stroke-dasharray="1 2"/><line x1="400.5" y1="165" x2="400.5" y2="568" stroke="#e8e8e8" stroke-width="1" stroke-dasharray="1 2"/><line x1="420.5" y1="165" x2="420.5" y2="568" stroke="#e8e8e8" stroke-width="1" stroke-dasharray="1 2"/><line x1="441.5" y1="165" x2="441.5" y2="568" stroke="#e8e8e8" stroke-width="1" stroke-dasharray="1 2"/><line x1="462.5" y1="165" x2="462.5" y2="568" stroke="#e8e8e8" stroke-width="1" stroke-dasharray="1 2"/><line x1="482.5" y1="165" x2="482.5" y2="568" stroke="#e8e8e8" stroke-width="1" stroke-dasharray="1 2"/><line x1="503.5" y1="165" x2="503.5" y2="568" stroke="#e8e8e8" stroke-width="1" stroke-dasharray="1 2"/><line x1="524.5" y1="165" x2="524.5" y2="568" stroke="#e8e8e8" stroke-width="1" stroke-dasharray="1 2"/><line x1="544.5" y1="165" x2="544.5" y2="568" stroke="#e8e8e8" stroke-width="1" stroke-dasharray="1 2"/><line x1="565.5" y1="165" x2="565.5" y2="568" stroke="#e8e8e8" stroke-width="1" stroke-dasharray="1 2"/><line x1="586.5" y1="165" x2="586.5" y2="568" stroke="#e8e8e8" stroke-width="1" stroke-dasharray="1 2"/><line x1="606.5" y1="165" x2="606.5" y2="568" stroke="#e8e8e8" stroke-width="1" stroke-dasharray="1 2"/><line x1="627.5" y1="165" x2="627.5" y2="568" stroke="#e8e8e8" stroke-width="1" stroke-dasharray="1 2"/><line x1="648.5" y1="165" x2="648.5" y2="568" stroke="#e8e8e8" stroke-width="1" stroke-dasharray="1 2"/><line x1="668.5" y1="165" x2="668.5" y2="568" stroke="#e8e8e8" stroke-width="1" stroke-dasharray="1 2"/><line x1="689.5" y1="165" x2="689.5" y2="568" stroke="#e8e8e8" stroke-width="1" stroke-dasharray="1 2"/><line x1="710.5" y1="165" x2="710.5" y2="568" stroke="#e8e8e8" stroke-width="1" stroke-dasharray="1 2"/><line x1="730.5" y1="165" x2="730.5" y2="568" stroke="#e8e8e8" stroke-width="1" stroke-dasharray="1 2"/><line x1="751.5" y1="165" x2="751.5" y2="568" stroke="#e8e8e8" stroke-width="1" stroke-dasharray="1 2"/><line x1="772.5" y1="165" x2="772.5" y2="568" stroke="#e8e8e8" stroke-width="1" stroke-dasharray="1 2"/><line x1="792.5" y1="165" x2="792.5" y2="568" stroke="#e8e8e8" stroke-width="1" stroke-dasharray="1 2"/><line x1="813.5" y1="165" x2="813.5" y2="568" stroke="#e8e8e8" stroke-width="1" stroke-dasharray="1 2"/><line x1="834.5" y1="165" x2="834.5" y2="568" stroke="#e8e8e8" stroke-width="1" stroke-dasharray="1 2"/><line x1="854.5" y1="165" x2="854.5" y2="568" stroke="#e8e8e8" stroke-width="1" stroke-dasharray="1 2"/><line x1="329" y1="174.5" x2="864" y2="174.5" stroke="#e8e8e8" stroke-width="1" stroke-dasharray="1 2"/><line x1="329" y1="194.5" x2="864" y2="194.5" stroke="#e8e8e8" stroke-width="1" stroke-dasharray="1 2"/><line x1="329" y1="215.5" x2="864" y2="215.5" stroke="#e8e8e8" stroke-width="1" stroke-dasharray="1 2"/><line x1="329" y1="236.5" x2="864" y2="236.5" stroke="#e8e8e8" stroke-width="1" stroke-dasharray="1 2"/><line x1="329" y1="256.5" x2="864" y2="256.5" stroke="#e8e8e8" stroke-width="1" stroke-dasharray="1 2"/><line x1="329" y1="277.5" x2="864" y2="277.5" stroke="#e8e8e8" stroke-width="1" stroke-dasharray="1 2"/><line x1="329" y1="298.5" x2="864" y2="298.5" stroke="#e8e8e8" stroke-width="1" stroke-dasharray="1 2"/><line x1="329" y1="318.5" x2="864" y2="318.5" stroke="#e8e8e8" stroke-width="1" stroke-dasharray="1 2"/><line x1="329" y1="339.5" x2="864" y2="339.5" stroke="#e8e8e8" stroke-width="1" stroke-dasharray="1 2"/><line x1="329" y1="360.5" x2="864" y2="360.5" stroke="#e8e8e8" stroke-width="1" stroke-dasharray="1 2"/><line x1="329" y1="380.5" x2="864" y2="380.5" stroke="#e8e8e8" stroke-width="1" stroke-dasharray="1 2"/><line x1="329" y1="401.5" x2="864" y2="401.5" stroke="#e8e8e8" stroke-width="1" stroke-dasharray="1 2"/><line x1="329" y1="422.5" x2="864" y2="422.5" stroke="#e8e8e8" stroke-width="1" stroke-dasharray="1 2"/><line x1="329" y1="442.5" x2="864" y2="442.5" stroke="#e8e8e8" stroke-width="1" stroke-dasharray="1 2"/><line x1="329" y1="463.5" x2="864" y2="463.5" stroke="#e8e8e8" stroke-width="1" stroke-dasharray="1 2"/><line x1="329" y1="484.5" x2="864" y2="484.5" stroke="#e8e8e8" stroke-width="1" stroke-dasharray="1 2"/><line x1="329" y1="504.5" x2="864" y2="504.5" stroke="#e8e8e8" stroke-width="1" stroke-dasharray="1 2"/><line x1="329" y1="525.5" x2="864" y2="525.5" stroke="#e8e8e8" stroke-width="1" stroke-dasharray="1 2"/><line x1="329" y1="546.5" x2="864" y2="546.5" stroke="#e8e8e8" stroke-width="1" stroke-dasharray="1 2"/><line x1="329" y1="566.5" x2="864" y2="566.5" stroke="#e8e8e8" stroke-width="1" stroke-dasharray="1 2"/><line x1="369.5" y1="165" x2="369.5" y2="568" stroke="#d0d0d0" stroke-width="1" stroke-dasharray="2 1"/><line x1="389.5" y1="165" x2="389.5" y2="568" stroke="#d0d0d0" stroke-width="1" stroke-dasharray="2 1"/><line x1="410.5" y1="165" x2="410.5" y2="568" stroke="#d0d0d0" stroke-width="1" stroke-dasharray="2 1"/><line x1="431.5" y1="165" x2="431.5" y2="568" stroke="#d0d0d0" stroke-width="1" stroke-dasharray="2 1"/><line x1="451.5" y1="165" x2="451.5" y2="568" stroke="#d0d0d0" stroke-width="1" stroke-dasharray="2 1"/><line x1="472.5" y1="165" x2="472.5" y2="568" stroke="#d0d0d0" stroke-width="1" stroke-dasharray="2 1"/><line x1="493.5" y1="165" x2="493.5" y2="568" stroke="#d0d0d0" stroke-width="1" stroke-dasharray="2 1"/><line x1="513.5" y1="165" x2="513.5" y2="568" stroke="#d0d0d0" stroke-width="1" stroke-dasharray="2 1"/><line x1="534.5" y1="165" x2="534.5" y2="568" stroke="#d0d0d0" stroke-width="1" stroke-dasharray="2 1"/><line x1="555.5" y1="165" x2="555.5" y2="568" stroke="#d0d0d0" stroke-width="1" stroke-dasharray="2 1"/><line x1="575.5" y1="165" x2="575.5" y2="568" stroke="#d0d0d0" stroke-width="1" stroke-dasharray="2 1"/><line x1="596.5" y1="165" x2="596.5" y2="568" stroke="#d0d0d0" stroke-width="1" stroke-dasharray="2 1"/><line x1="617.5" y1="165" x2="617.5" y2="568" stroke="#d0d0d0" stroke-width="1" stroke-dasharray="2 1"/><line x1="637.5" y1="165" x2="637.5" y2="568" stroke="#d0d0d0" stroke-width="1" stroke-dasharray="2 1"/><line x1="658.5" y1="165" x2="658.5" y2="568" stroke="#d0d0d0" stroke-width="1" stroke-dasharray="2 1"/><line x1="679.5" y1="165" x2="679.5" y2="568" stroke="#d0d0d0" stroke-width="1" stroke-dasharray="2 1"/><line x1="699.5" y1="165" x2="699.5" y2="568" stroke="#d0d0d0" stroke-width="1" stroke-dasharray="2 1"/><line x1="720.5" y1="165" x2="720.5" y2="568" stroke="#d0d0d0" stroke-width="1" stroke-dasharray="2 1"/><line x1="741.5" y1="165" x2="741.5" y2="568" stroke="#d0d0d0" stroke-width="1" stroke-dasharray="2 1"/><line x1="761.5" y1="165" x2="761.5" y2="568" stroke="#d0d0d0" stroke-width="1" stroke-dasharray="2 1"/><line x1="782.5" y1="165" x2="782.5" y2="568" stroke="#d0d0d0" stroke-width="1" stroke-dasharray="2 1"/><line x1="803.5" y1="165" x2="803.5" y2="568" stroke="#d0d0d0" stroke-width="1" stroke-dasharray="2 1"/><line x1="823.5" y1="165" x2="823.5" y2="568" stroke="#d0d0d0" stroke-width="1" stroke-dasharray="2 1"/><line x1="844.5" y1="165" x2="844.5" y2="568" stroke="#d0d0d0" stroke-width="1" stroke-dasharray="2 1"/><line x1="329" y1="205.5" x2="864" y2="205.5" stroke="#d0d0d0" stroke-width="1" stroke-dasharray="2 1"/><line x1="329" y1="225.5" x2="864" y2="225.5" stroke="#d0d0d0" stroke-width="1" stroke-dasharray="2 1"/><line x1="329" y1="246.5" x2="864" y2="246.5" stroke="#d0d0d0" stroke-width="1" stroke-dasharray="2 1"/><line x1="329" y1="267.5" x2="864" y2="267.5" stroke="#d0d0d0" stroke-width="1" stroke-dasharray="2 1"/><line x1="329" y1="287.5" x2="864" y2="287.5" stroke="#d0d0d0" stroke-width="1" stroke-dasharray="2 1"/><line x1="329" y1="308.5" x2="864" y2="308.5" stroke="#d0d0d0" stroke-width="1" stroke-dasharray="2 1"/><line x1="329" y1="329.5" x2="864" y2="329.5" stroke="#d0d0d0" stroke-width="1" stroke-dasharray="2 1"/><line x1="329" y1="349.5" x2="864" y2="349.5" stroke="#d0d0d0" stroke-width="1" stroke-dasharray="2 1"/><line x1="329" y1="370.5" x2="864" y2="370.5" stroke="#d0d0d0" stroke-width="1" stroke-dasharray="2 1"/><line x1="329" y1="391.5" x2="864" y2="391.5" stroke="#d0d0d0" stroke-width="1" stroke-dasharray="2 1"/><line x1="329" y1="411.5" x2="864" y2="411.5" stroke="#d0d0d0" stroke-width="1" stroke-dasharray="2 1"/><line x1="329" y1="432.5" x2="864" y2="432.5" stroke="#d0d0d0" stroke-width="1" stroke-dasharray="2 1"/><line x1="329" y1="453.5" x2="864" y2="453.5" stroke="#d0d0d0" stroke-width="1" stroke-dasharray="2 1"/><line x1="329" y1="473.5" x2="864" y2="473.5" stroke="#d0d0d0" stroke-width="1" stroke-dasharray="2 1"/><line x1="329" y1="494.5" x2="864" y2="494.5" stroke="#d0d0d0" stroke-width="1" stroke-dasharray="2 1"/><line x1="329" y1="515.5" x2="864" y2="515.5" stroke="#d0d0d0" stroke-width="1" stroke-dasharray="2 1"/><line x1="329" y1="535.5" x2="864" y2="535.5" stroke="#d0d0d0" stroke-width="1" stroke-dasharray="2 1"/><line x1="329" y1="556.5" x2="864" y2="556.5" stroke="#d0d0d0" stroke-width="1" stroke-dasharray="2 1"/><path d="M348.5 164 L348.5 184.5 L328 184.5" fill="none" stroke="#d0d0d0" stroke-width="1" stroke-dasharray="2 1"/><path d="M844 184.5 L864 184.5" fill="none" stroke="#d0d0d0" stroke-width="1" stroke-dasharray="2 1"/><path d="M348.5 548 L348.5 568" fill="none" stroke="#d0d0d0" stroke-width="1" stroke-dasharray="2 1"/><line x1="328" y1="164.5" x2="864" y2="164.5" stroke="#d0d0d0" stroke-width="1"/><line x1="328" y1="164.5" x2="864" y2="164.5" stroke="#7a7a7a" stroke-width="1" stroke-dasharray="1 2"/><line x1="328.5" y1="164" x2="328.5" y2="568" stroke="#d0d0d0" stroke-width="1"/><line x1="328.5" y1="164" x2="328.5" y2="568" stroke="#7a7a7a" stroke-width="1" stroke-dasharray="1 2"/><path d="M864.5 164 L864.5 568.5 L328 568.5" fill="none" stroke="#9c9c9c" stroke-width="1"/><rect x="328" y="163" width="2" height="2" fill="#603010"/><rect x="325" y="166" width="3" height="2" fill="#6a3a20"/><path d="M346 167 h1.2 M348 167 h1.2 M350 167 h1.2" stroke="#3a3030" stroke-width="2" opacity="0.75"/><path d="M367 167 h1.2 M369 167 h1.2 M371 167 h1.2" stroke="#3a3030" stroke-width="2" opacity="0.75"/><path d="M387 167 h1.2 M389 167 h1.2 M391 167 h1.2" stroke="#3a3030" stroke-width="2" opacity="0.75"/><path d="M408 167 h1.2 M410 167 h1.2 M412 167 h1.2" stroke="#3a3030" stroke-width="2" opacity="0.75"/><path d="M429 167 h1.2 M431 167 h1.2 M433 167 h1.2" stroke="#3a3030" stroke-width="2" opacity="0.75"/><path d="M449 167 h1.2 M451 167 h1.2 M453 167 h1.2" stroke="#3a3030" stroke-width="2" opacity="0.75"/><path d="M470 167 h1.2 M472 167 h1.2 M474 167 h1.2" stroke="#3a3030" stroke-width="2" opacity="0.75"/><path d="M491 167 h1.2 M493 167 h1.2 M495 167 h1.2" stroke="#3a3030" stroke-width="2" opacity="0.75"/><path d="M511 167 h1.2 M513 167 h1.2 M515 167 h1.2" stroke="#3a3030" stroke-width="2" opacity="0.75"/><path d="M532 167 h1.2 M534 167 h1.2 M536 167 h1.2" stroke="#3a3030" stroke-width="2" opacity="0.75"/><path d="M553 167 h1.2 M555 167 h1.2 M557 167 h1.2" stroke="#3a3030" stroke-width="2" opacity="0.75"/><path d="M573 167 h1.2 M575 167 h1.2 M577 167 h1.2" stroke="#3a3030" stroke-width="2" opacity="0.75"/><path d="M594 167 h1.2 M596 167 h1.2 M598 167 h1.2" stroke="#3a3030" stroke-width="2" opacity="0.75"/><path d="M615 167 h1.2 M617 167 h1.2 M619 167 h1.2" stroke="#3a3030" stroke-width="2" opacity="0.75"/><path d="M635 167 h1.2 M637 167 h1.2 M639 167 h1.2" stroke="#3a3030" stroke-width="2" opacity="0.75"/><path d="M656 167 h1.2 M658 167 h1.2 M660 167 h1.2" stroke="#3a3030" stroke-width="2" opacity="0.75"/><path d="M677 167 h1.2 M679 167 h1.2 M681 167 h1.2" stroke="#3a3030" stroke-width="2" opacity="0.75"/><path d="M697 167 h1.2 M699 167 h1.2 M701 167 h1.2" stroke="#3a3030" stroke-width="2" opacity="0.75"/><path d="M718 167 h1.2 M720 167 h1.2 M722 167 h1.2" stroke="#3a3030" stroke-width="2" opacity="0.75"/><path d="M739 167 h1.2 M741 167 h1.2 M743 167 h1.2" stroke="#3a3030" stroke-width="2" opacity="0.75"/><path d="M759 167 h1.2 M761 167 h1.2 M763 167 h1.2" stroke="#3a3030" stroke-width="2" opacity="0.75"/><path d="M780 167 h1.2 M782 167 h1.2 M784 167 h1.2" stroke="#3a3030" stroke-width="2" opacity="0.75"/><path d="M801 167 h1.2 M803 167 h1.2 M805 167 h1.2" stroke="#3a3030" stroke-width="2" opacity="0.75"/><path d="M821 167 h1.2 M823 167 h1.2 M825 167 h1.2" stroke="#3a3030" stroke-width="2" opacity="0.75"/><path d="M842 167 h1.2 M844 167 h1.2 M846 167 h1.2" stroke="#3a3030" stroke-width="2" opacity="0.75"/><path d="M329 184.5 h1.2 M331 184.5 h1.2" stroke="#3a3030" stroke-width="2" opacity="0.75"/><path d="M329 205.5 h1.2 M331 205.5 h1.2" stroke="#3a3030" stroke-width="2" opacity="0.75"/><path d="M329 225.5 h1.2 M331 225.5 h1.2" stroke="#3a3030" stroke-width="2" opacity="0.75"/><path d="M329 246.5 h1.2 M331 246.5 h1.2" stroke="#3a3030" stroke-width="2" opacity="0.75"/><path d="M329 267.5 h1.2 M331 267.5 h1.2" stroke="#3a3030" stroke-width="2" opacity="0.75"/><path d="M329 287.5 h1.2 M331 287.5 h1.2" stroke="#3a3030" stroke-width="2" opacity="0.75"/><path d="M329 308.5 h1.2 M331 308.5 h1.2" stroke="#3a3030" stroke-width="2" opacity="0.75"/><path d="M329 329.5 h1.2 M331 329.5 h1.2" stroke="#3a3030" stroke-width="2" opacity="0.75"/><path d="M329 349.5 h1.2 M331 349.5 h1.2" stroke="#3a3030" stroke-width="2" opacity="0.75"/><path d="M329 370.5 h1.2 M331 370.5 h1.2" stroke="#3a3030" stroke-width="2" opacity="0.75"/><path d="M329 391.5 h1.2 M331 391.5 h1.2" stroke="#3a3030" stroke-width="2" opacity="0.75"/><path d="M329 411.5 h1.2 M331 411.5 h1.2" stroke="#3a3030" stroke-width="2" opacity="0.75"/><path d="M329 432.5 h1.2 M331 432.5 h1.2" stroke="#3a3030" stroke-width="2" opacity="0.75"/><path d="M329 453.5 h1.2 M331 453.5 h1.2" stroke="#3a3030" stroke-width="2" opacity="0.75"/><path d="M329 473.5 h1.2 M331 473.5 h1.2" stroke="#3a3030" stroke-width="2" opacity="0.75"/><path d="M329 494.5 h1.2 M331 494.5 h1.2" stroke="#3a3030" stroke-width="2" opacity="0.75"/><path d="M329 515.5 h1.2 M331 515.5 h1.2" stroke="#3a3030" stroke-width="2" opacity="0.75"/><path d="M329 535.5 h1.2 M331 535.5 h1.2" stroke="#3a3030" stroke-width="2" opacity="0.75"/><path d="M329 556.5 h1.2 M331 556.5 h1.2" stroke="#3a3030" stroke-width="2" opacity="0.75"/><rect x="401" y="214" width="62" height="62" fill="url(#gsq)"/><rect x="564.5" y="213.5" width="61" height="61" fill="none" stroke="#989898" stroke-width="1"/><rect x="687" y="290" width="3" height="59" fill="#000"/><rect x="692" y="290" width="2" height="59" fill="#000"/><rect x="696" y="290" width="3" height="59" fill="#000"/><rect x="702" y="290" width="2" height="59" fill="#000"/><rect x="705" y="290" width="4" height="59" fill="#000"/><rect x="710" y="290" width="3" height="59" fill="#000"/><rect x="715" y="290" width="2" height="59" fill="#000"/><rect x="718" y="290" width="3" height="59" fill="#000"/><rect x="723" y="290" width="3" height="59" fill="#000"/><rect x="728" y="290" width="2" height="59" fill="#000"/><rect x="731" y="290" width="4" height="59" fill="#000"/><rect x="737" y="290" width="1" height="59" fill="#000"/><rect x="740" y="290" width="4" height="59" fill="#000"/><rect x="455.5" y="291.5" width="60.5" height="60" fill="none" stroke="#d8d8d8" stroke-width="1" stroke-dasharray="2 2"/><path d="M464 338 L479.8 318.6 L480 339.5 Z" fill="#4a9ae8"/><path d="M461.8 331 L477.6 308.2 L476 314 L469.5 329.5 Z" fill="#2a68c8"/><path d="M466.4 334 L472 325 L479.8 311.7 L478.5 318 L476.5 326 L470.5 333 Z" fill="#101828"/><path d="M462.5 331.5 L469.5 329.5 L476 314 L477.6 308.2 L476.2 311 Z" fill="#1e58b8"/><path d="M469 336.5 L475.5 331 L479.5 323 L479.8 339.4 L468 339.4 Z" fill="#3a88e0" opacity="0.9"/><rect x="485.6" y="302.4" width="1.7" height="38.2" fill="#a8a8a8"/><rect x="485.9" y="302.4" width="0.6" height="38.2" fill="#d8d8d8"/><rect x="493.7" y="305.3" width="1.9" height="36.5" fill="#909090"/><rect x="494.1" y="305.3" width="0.6" height="36.5" fill="#c8c8c8"/><line x1="483.3" y1="331.8" x2="506.4" y2="332.2" stroke="#5a5a5a" stroke-width="0.9"/><path d="M500.5 334.5 L502 338.5 L499.5 340 L503.5 339.5" fill="none" stroke="#404040" stroke-width="0.8"/><path d="M455.4 339.4 Q482 341 508.8 342.2 L508.8 343.4 Q482 342.6 462 341.2 Z" fill="#3a4aa0"/><path d="M460 341 Q484 343.2 508.8 343.4 L508.6 345 Q490 346.2 470 345.4 Q464 343.6 460 341 Z" fill="#d03848"/><path d="M466 344.8 Q488 346.5 508.6 345 L506 346 Q488 347.6 470 346.4 Z" fill="#8a90c8" opacity="0.8"/><path d="M467 345 L473.5 347.8 L476.5 345.8 Z" fill="#24307a"/><rect x="439.5" y="431.5" width="61.5" height="61" fill="none" stroke="#a8a8a8" stroke-width="1"/><line x1="451.5" y1="431" x2="451.5" y2="495" stroke="#a0a0a0" stroke-width="1"/><line x1="451" y1="435.4" x2="501" y2="435.4" stroke="#909090" stroke-width="1"/><line x1="451" y1="453.4" x2="501" y2="453.4" stroke="#909090" stroke-width="1"/><line x1="451" y1="470.2" x2="501" y2="470.2" stroke="#909090" stroke-width="1"/><line x1="451" y1="488.2" x2="501" y2="488.2" stroke="#909090" stroke-width="1"/><rect x="453.1" y="474" width="13.7" height="14.2" fill="url(#gb1)"/><rect x="469.1" y="435.3" width="13.7" height="52.9" fill="url(#gb2)"/><rect x="485.1" y="455.1" width="13.9" height="33.1" fill="url(#gb3)"/><text x="450.5" y="438.5" font-family="Liberation Sans" font-size="6.5" fill="#3a2a20" text-anchor="end">150</text><text x="450.5" y="456.5" font-family="Liberation Sans" font-size="6.5" fill="#3a2a20" text-anchor="end">100</text><text x="450.5" y="473.3" font-family="Liberation Sans" font-size="6.5" fill="#3a2a20" text-anchor="end">50</text><text x="450.5" y="491.3" font-family="Liberation Sans" font-size="6.5" fill="#3a2a20" text-anchor="end">0</text><text x="460" y="486.5" font-family="Liberation Sans" font-size="6.5" fill="#101820" text-anchor="middle">40</text><text x="476" y="486.5" font-family="Liberation Sans" font-size="6.5" fill="#101820" text-anchor="middle">150</text><text x="492" y="486.5" font-family="Liberation Sans" font-size="6.5" fill="#101820" text-anchor="middle">95</text><rect x="648.5" y="471.5" width="61.5" height="61" fill="none" stroke="#dadada" stroke-width="1" stroke-dasharray="2 2"/><path d="M679.3 471.4 L709.9 532.1 L648.4 532.1 Z" fill="none" stroke="#9a9a9a" stroke-width="1"/></svg>
<svg class="ab" style="left:0;top:0" width="1060" height="647" font-family="Liberation Sans, sans-serif"><text x="29.88" y="22.8" font-size="12" fill="#1a1a1a" stroke="#1a1a1a" stroke-width="0.18" textLength="79.54" lengthAdjust="spacingAndGlyphs">demovisualizer</text><text x="80.14" y="42.6" font-size="11" fill="#000" stroke="#000" stroke-width="0.18" textLength="63.92" lengthAdjust="spacingAndGlyphs">Visualizations</text><text x="292.74" y="41.6" font-size="11" fill="#000" stroke="#000" stroke-width="0.18" textLength="55.32" lengthAdjust="spacingAndGlyphs">WorkSpace</text><text x="496.84" y="42.6" font-size="11" fill="#000" stroke="#000" stroke-width="0.18" textLength="63.82" lengthAdjust="spacingAndGlyphs">Print Preview</text><text x="706.14" y="42.6" font-size="11" fill="#000" stroke="#000" stroke-width="0.18" textLength="63.72" lengthAdjust="spacingAndGlyphs">Collaboration</text><text x="91.14" y="107" font-size="11" fill="#000" stroke="#000" stroke-width="0.18" textLength="37.92" lengthAdjust="spacingAndGlyphs">Objects</text><text x="84.94" y="311.6" font-size="11" fill="#000" stroke="#000" stroke-width="0.18" textLength="50.12" lengthAdjust="spacingAndGlyphs">Properties</text><text x="942.94" y="106.6" font-size="11" fill="#000" stroke="#000" stroke-width="0.18" textLength="23.72" lengthAdjust="spacingAndGlyphs">Data</text><text x="91.58" y="124" font-size="12" fill="#000" stroke="#000" stroke-width="0.18" textLength="36.14" lengthAdjust="spacingAndGlyphs">Report</text><text x="103.48" y="141" font-size="12" fill="#000" stroke="#000" stroke-width="0.18" textLength="37.24" lengthAdjust="spacingAndGlyphs">Page_1</text><text x="114.98" y="158" font-size="12" fill="#000" stroke="#000" stroke-width="0.18" textLength="44.74" lengthAdjust="spacingAndGlyphs">Image_1</text><text x="115.58" y="175" font-size="12" fill="#000" stroke="#000" stroke-width="0.18" textLength="40.34" lengthAdjust="spacingAndGlyphs">Chart_1</text><text x="115.58" y="192" font-size="12" fill="#000" stroke="#000" stroke-width="0.18" textLength="54.24" lengthAdjust="spacingAndGlyphs">Barcode_1</text><text x="115.58" y="209" font-size="12" fill="#000" stroke="#000" stroke-width="0.18" textLength="56.34" lengthAdjust="spacingAndGlyphs">Gradient_1</text><text x="115.58" y="226" font-size="12" fill="#000" stroke="#000" stroke-width="0.18" textLength="63.34" lengthAdjust="spacingAndGlyphs">Rectangle_1</text><text x="115.58" y="243" font-size="12" fill="#000" stroke="#000" stroke-width="0.18" textLength="54.24" lengthAdjust="spacingAndGlyphs">Triangle_1</text><text x="942.68" y="124" font-size="12" fill="#000" stroke="#000" stroke-width="0.18" textLength="53.34" lengthAdjust="spacingAndGlyphs">Customer</text><text x="957.78" y="141" font-size="12" fill="#000" stroke="#000" stroke-width="0.18" textLength="24.24" lengthAdjust="spacingAndGlyphs">Title</text><text x="957.78" y="158" font-size="12" fill="#000" stroke="#000" stroke-width="0.18" textLength="30.64" lengthAdjust="spacingAndGlyphs">Street</text><text x="957.78" y="175" font-size="12" fill="#000" stroke="#000" stroke-width="0.18" textLength="45.84" lengthAdjust="spacingAndGlyphs">Revenue</text><text x="943.08" y="192" font-size="12" fill="#000" stroke="#000" stroke-width="0.18" textLength="38.94" lengthAdjust="spacingAndGlyphs">Invoice</text><text x="957.78" y="209" font-size="12" fill="#000" stroke="#000" stroke-width="0.18" textLength="44.74" lengthAdjust="spacingAndGlyphs">Number</text><text x="957.78" y="226" font-size="12" fill="#000" stroke="#000" stroke-width="0.18" textLength="25.24" lengthAdjust="spacingAndGlyphs">Date</text><text x="957.78" y="243" font-size="12" fill="#000" stroke="#000" stroke-width="0.18" textLength="44.74" lengthAdjust="spacingAndGlyphs">Amount</text><text x="68.88" y="331.8" font-size="12" fill="#000" stroke="#000" stroke-width="0.18" textLength="45.64" lengthAdjust="spacingAndGlyphs">Property</text><text x="168.28" y="331.8" font-size="12" fill="#000" stroke="#000" stroke-width="0.18" textLength="30.44" lengthAdjust="spacingAndGlyphs">Value</text><text x="76.68" y="354" font-size="12" fill="#000" stroke="#000" stroke-width="0.18" textLength="66.04" lengthAdjust="spacingAndGlyphs">objectName</text><text x="159.20" y="355.8" font-size="16" font-weight="bold" fill="#000" textLength="102.32" lengthAdjust="spacingAndGlyphs">Rectangle_1</text><text x="76.68" y="374" font-size="12" fill="#000" stroke="#000" stroke-width="0.18" textLength="52.74" lengthAdjust="spacingAndGlyphs">Geometry</text><text x="91.08" y="394" font-size="12" fill="#000" stroke="#000" stroke-width="0.18" textLength="6.64" lengthAdjust="spacingAndGlyphs">x</text><text x="159.20" y="395.6" font-size="16" font-weight="bold" fill="#000" textLength="35.52" lengthAdjust="spacingAndGlyphs">10.0</text><text x="91.08" y="415" font-size="12" fill="#000" stroke="#000" stroke-width="0.18" textLength="7.04" lengthAdjust="spacingAndGlyphs">y</text><text x="159.20" y="416.6" font-size="16" font-weight="bold" fill="#000" textLength="35.52" lengthAdjust="spacingAndGlyphs">10.0</text><text x="91.08" y="436" font-size="12" fill="#000" stroke="#000" stroke-width="0.18" textLength="31.24" lengthAdjust="spacingAndGlyphs">width</text><text x="158.40" y="437.6" font-size="16" font-weight="bold" fill="#000" textLength="46.52" lengthAdjust="spacingAndGlyphs">300.0</text><text x="91.08" y="457" font-size="12" fill="#000" stroke="#000" stroke-width="0.18" textLength="35.54" lengthAdjust="spacingAndGlyphs">height</text><text x="158.40" y="458.6" font-size="16" font-weight="bold" fill="#000" textLength="46.52" lengthAdjust="spacingAndGlyphs">300.0</text><text x="76.98" y="477" font-size="12" fill="#000" stroke="#000" stroke-width="0.18" textLength="20.14" lengthAdjust="spacingAndGlyphs">Pen</text><text x="91.88" y="497" font-size="12" fill="#000" stroke="#000" stroke-width="0.18" textLength="45.04" lengthAdjust="spacingAndGlyphs">capStyle</text><text x="158.40" y="498.6" font-size="16" font-weight="bold" fill="#000" textLength="63.62" lengthAdjust="spacingAndGlyphs">FlatCap</text><text x="91.08" y="518" font-size="12" fill="#000" stroke="#000" stroke-width="0.18" textLength="46.84" lengthAdjust="spacingAndGlyphs">joinStyle</text><text x="158.40" y="519.6" font-size="16" font-weight="bold" fill="#000" textLength="79.52" lengthAdjust="spacingAndGlyphs">BevelJoin</text><text x="91.88" y="539" font-size="12" fill="#000" stroke="#000" stroke-width="0.18" textLength="59.64" lengthAdjust="spacingAndGlyphs">mitterLimit</text><text x="158.40" y="540.6" font-size="16" font-weight="bold" fill="#000" textLength="36.52" lengthAdjust="spacingAndGlyphs">2.00</text><text x="91.88" y="560" font-size="12" fill="#000" stroke="#000" stroke-width="0.18" textLength="25.04" lengthAdjust="spacingAndGlyphs">style</text><text x="158.40" y="561.6" font-size="16" font-weight="bold" fill="#000" textLength="75.82" lengthAdjust="spacingAndGlyphs">SolidLine</text><text x="91.88" y="581" font-size="12" fill="#000" stroke="#000" stroke-width="0.18" textLength="52.44" lengthAdjust="spacingAndGlyphs">penWidth</text><text x="158.40" y="582.6" font-size="16" font-weight="bold" fill="#000" textLength="12.02" lengthAdjust="spacingAndGlyphs">0</text><text x="76.98" y="601" font-size="12" fill="#000" stroke="#000" stroke-width="0.18" textLength="51.44" lengthAdjust="spacingAndGlyphs">needHelp</text><text x="158.40" y="602.6" font-size="16" font-weight="bold" fill="#000" textLength="30.92" lengthAdjust="spacingAndGlyphs">Yes</text><text x="76.98" y="620" font-size="12" fill="#000" stroke="#000" stroke-width="0.18" textLength="50.64" lengthAdjust="spacingAndGlyphs">needDate</text><text x="159.20" y="621.6" font-size="16" font-weight="bold" fill="#000" textLength="78.62" lengthAdjust="spacingAndGlyphs">10/16/14</text></svg>
</body></html>
